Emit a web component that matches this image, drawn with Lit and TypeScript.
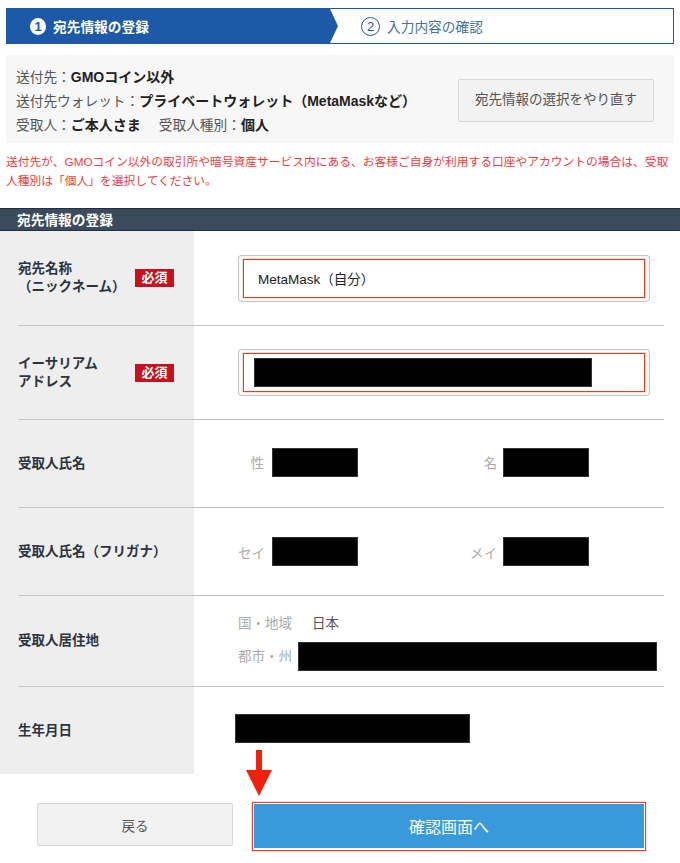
import { LitElement, html, css } from "lit";
import { customElement } from "lit/decorators.js";

@customElement("app-root")
export class AppRoot extends LitElement {
  static styles = css`
    :host {
      display: block;
      width: 680px;
      height: 863px;
      overflow: hidden;
      background: #fff;
      font-family: "Liberation Sans", "Noto Sans CJK JP", sans-serif;
      color: #2b3440;
    }

    /* steps */
    .steps {
      display: flex;
      height: 36px;
      margin: 8px 6px 0;
      border: 1px solid #1c5aa8;
      box-sizing: border-box;
    }
    .step {
      display: flex;
      align-items: center;
      gap: 7px;
      font-size: 13.7px;
    }
    .step--active {
      width: 331px;
      padding-left: 23px;
      box-sizing: border-box;
      background: #1c5aa8;
      color: #fff;
      font-weight: 700;
      clip-path: polygon(0 0, 323px 0, 100% 50%, 323px 100%, 0 100%);
    }
    .step--next {
      padding-left: 23px;
      color: #47729f;
    }
    .step__num {
      width: 16px;
      height: 17px;
      border-radius: 50%;
      background: #fff;
      color: #1c5aa8;
      font-size: 13px;
      font-weight: 700;
      line-height: 17px;
      text-align: center;
    }
    .step__num--outline {
      width: 19px;
      height: 19px;
      box-sizing: border-box;
      border: 1px solid #1c5aa8;
      background: none;
      line-height: 17px;
      font-weight: 400;
    }

    /* summary */
    .summary {
      display: flex;
      justify-content: space-between;
      align-items: center;
      height: 88px;
      margin: 11px 6px 0;
      padding: 2px 20px 0 10px;
      box-sizing: border-box;
      background: #f7f7f7;
      font-size: 13.7px;
      line-height: 24px;
      color: #555;
    }
    .summary__text {
      padding-top: 2px;
    }
    .summary__line {
      height: 24px;
    }
    .summary b {
      color: #222;
      font-size: 14px;
    }
    .summary__gap {
      margin-left: 18px;
    }
    .btn {
      display: flex;
      align-items: center;
      justify-content: center;
      box-sizing: border-box;
      height: 43px;
      border: 1px solid #d9d9d9;
      border-radius: 2px;
      background: #f2f2f2;
      color: #555;
      font-size: 13.5px;
    }
    .btn--reset {
      width: 196px;
    }

    .note {
      margin: 9px 4px 0 6px;
      color: #f23a3a;
      font-size: 11.75px;
      line-height: 19px;
    }

    /* form */
    .section-title {
      height: 23px;
      margin-top: 18px;
      padding-left: 17px;
      box-sizing: border-box;
      border-top: 1px solid #1f3044;
      border-bottom: 1px solid #1f3044;
      background: #3b4a5c;
      color: #fff;
      font-size: 13.7px;
      font-weight: 700;
      line-height: 23px;
    }
    .table {
      background: linear-gradient(90deg, #eee 194px, #fff 194px);
    }
    .row {
      display: grid;
      grid-template-columns: 176px 1fr;
      align-items: center;
      box-sizing: border-box;
      margin: 0 16px 0 18px;
      border-bottom: 1px solid #c4c4c4;
    }
    .row:last-child {
      border-bottom: 0;
    }
    .row--name {
      height: 95px;
    }
    .row--address {
      height: 94px;
    }
    .row--person {
      height: 88px;
    }
    .row--home {
      height: 91px;
    }
    .row--birth {
      height: 87px;
    }
    .label {
      display: flex;
      align-items: center;
      justify-content: space-between;
      padding-right: 20px;
      font-size: 13.5px;
      font-weight: 700;
      line-height: 18px;
    }
    .badge {
      width: 39px;
      height: 18px;
      background: #c8101e;
      color: #fff;
      font-family: "Liberation Serif", "Noto Sans CJK JP", serif;
      font-size: 13px;
      line-height: 18px;
      text-align: center;
    }
    .input {
      width: 412px;
      height: 47px;
      margin-left: 44px;
      padding: 3px 4px;
      box-sizing: border-box;
      border: 1px solid #c6c6c6;
      border-radius: 3px;
      box-shadow: inset 0 0 1px #bbb;
    }
    .input__inner {
      display: flex;
      align-items: center;
      height: 100%;
      padding-left: 14px;
      box-sizing: border-box;
      border: 1px solid #f03a17;
      box-shadow: 0 0 1px #f03a17;
      color: #222;
      font-size: 13.5px;
    }
    .input__inner--masked {
      padding-left: 10px;
    }
    .redacted {
      height: 29px;
      background: #000;
      border: 1px solid #333;
      box-sizing: border-box;
    }
    .pair {
      display: flex;
      align-items: center;
      margin-left: 44px;
      font-size: 13.5px;
      color: #aaa;
    }
    .pair--raised {
      padding-bottom: 3px;
    }
    .pair__key {
      width: 26px;
      margin-right: 8px;
      text-align: right;
      white-space: nowrap;
    }
    .pair__key + .redacted {
      width: 86px;
    }
    .pair__key--second {
      width: 32px;
      margin-left: 107px;
      margin-right: 6px;
    }
    .home {
      margin-left: 44px;
      padding-top: 2px;
      font-size: 13.5px;
      line-height: 19px;
      color: #aaa;
    }
    .home__line {
      display: flex;
      align-items: center;
    }
    .home__line + .home__line {
      margin-top: 9px;
    }
    .home__value {
      margin-left: 20px;
      color: #555;
    }
    .home .redacted {
      width: 359px;
      margin-left: 6px;
    }
    .birth {
      width: 235px;
      margin: 0 0 4px 41px;
    }

    /* actions */
    .actions {
      position: relative;
      display: flex;
      align-items: flex-start;
      gap: 19px;
      padding: 29px 0 0 37px;
    }
    .btn--back {
      width: 196px;
    }
    .btn--next {
      width: 394px;
      height: 49px;
      margin-top: -1px;
      border: 1px solid #f03a2a;
      box-shadow: 0 0 1px #f03a2a;
      border-radius: 0;
      padding: 1px 1px 2px;
      background: #fff;
      font-size: 16px;
      color: #fff;
    }
    .btn--next span {
      display: flex;
      align-items: center;
      justify-content: center;
      width: 100%;
      height: 100%;
      background: #3a9ad9;
    }
    .arrow {
      position: absolute;
      left: 246px;
      top: -24px;
    }
  `;

  render() {
    return html`
      <div class="steps">
        <div class="step step--active">
          <span class="step__num">1</span>宛先情報の登録
        </div>
        <div class="step step--next">
          <span class="step__num step__num--outline">2</span>入力内容の確認
        </div>
      </div>

      <div class="summary">
        <div class="summary__text">
          <div class="summary__line">送付先：<b>GMOコイン以外</b></div>
          <div class="summary__line">送付先ウォレット：<b>プライベートウォレット（MetaMaskなど）</b></div>
          <div class="summary__line">
            受取人：<b>ご本人さま</b
            ><span class="summary__gap">受取人種別：<b>個人</b></span>
          </div>
        </div>
        <div class="btn btn--reset">宛先情報の選択をやり直す</div>
      </div>

      <p class="note">
        送付先が、GMOコイン以外の取引所や暗号資産サービス内にある、お客様ご自身が利用する口座やアカウントの場合は、受取人種別は「個人」を選択してください。
      </p>

      <div class="section-title">宛先情報の登録</div>
      <div class="table">
        <div class="row row--name">
          <div class="label">
            <div>宛先名称<br />（ニックネーム）</div>
            <span class="badge">必須</span>
          </div>
          <div class="input">
            <div class="input__inner">MetaMask（自分）</div>
          </div>
        </div>
        <div class="row row--address">
          <div class="label">
            <div>イーサリアム<br />アドレス</div>
            <span class="badge">必須</span>
          </div>
          <div class="input">
            <div class="input__inner input__inner--masked">
              <div class="redacted" style="width: 338px"></div>
            </div>
          </div>
        </div>
        <div class="row row--person">
          <div class="label">受取人氏名</div>
          <div class="pair pair--raised">
            <span class="pair__key">性</span>
            <div class="redacted"></div>
            <span class="pair__key pair__key--second">名</span>
            <div class="redacted"></div>
          </div>
        </div>
        <div class="row row--person">
          <div class="label">受取人氏名（フリガナ）</div>
          <div class="pair">
            <span class="pair__key">セイ</span>
            <div class="redacted"></div>
            <span class="pair__key pair__key--second">メイ</span>
            <div class="redacted"></div>
          </div>
        </div>
        <div class="row row--home">
          <div class="label">受取人居住地</div>
          <div class="home">
            <div class="home__line">国・地域<span class="home__value">日本</span></div>
            <div class="home__line">都市・州<div class="redacted"></div></div>
          </div>
        </div>
        <div class="row row--birth">
          <div class="label">生年月日</div>
          <div class="redacted birth"></div>
        </div>
      </div>

      <div class="actions">
        <svg class="arrow" width="26" height="47" viewBox="0 0 26 47">
          <path d="M10 0h6v20h10L13 46 0 20h10z" fill="#f0200f" />
        </svg>
        <div class="btn btn--back">戻る</div>
        <div class="btn btn--next"><span>確認画面へ</span></div>
      </div>
    `;
  }
}
